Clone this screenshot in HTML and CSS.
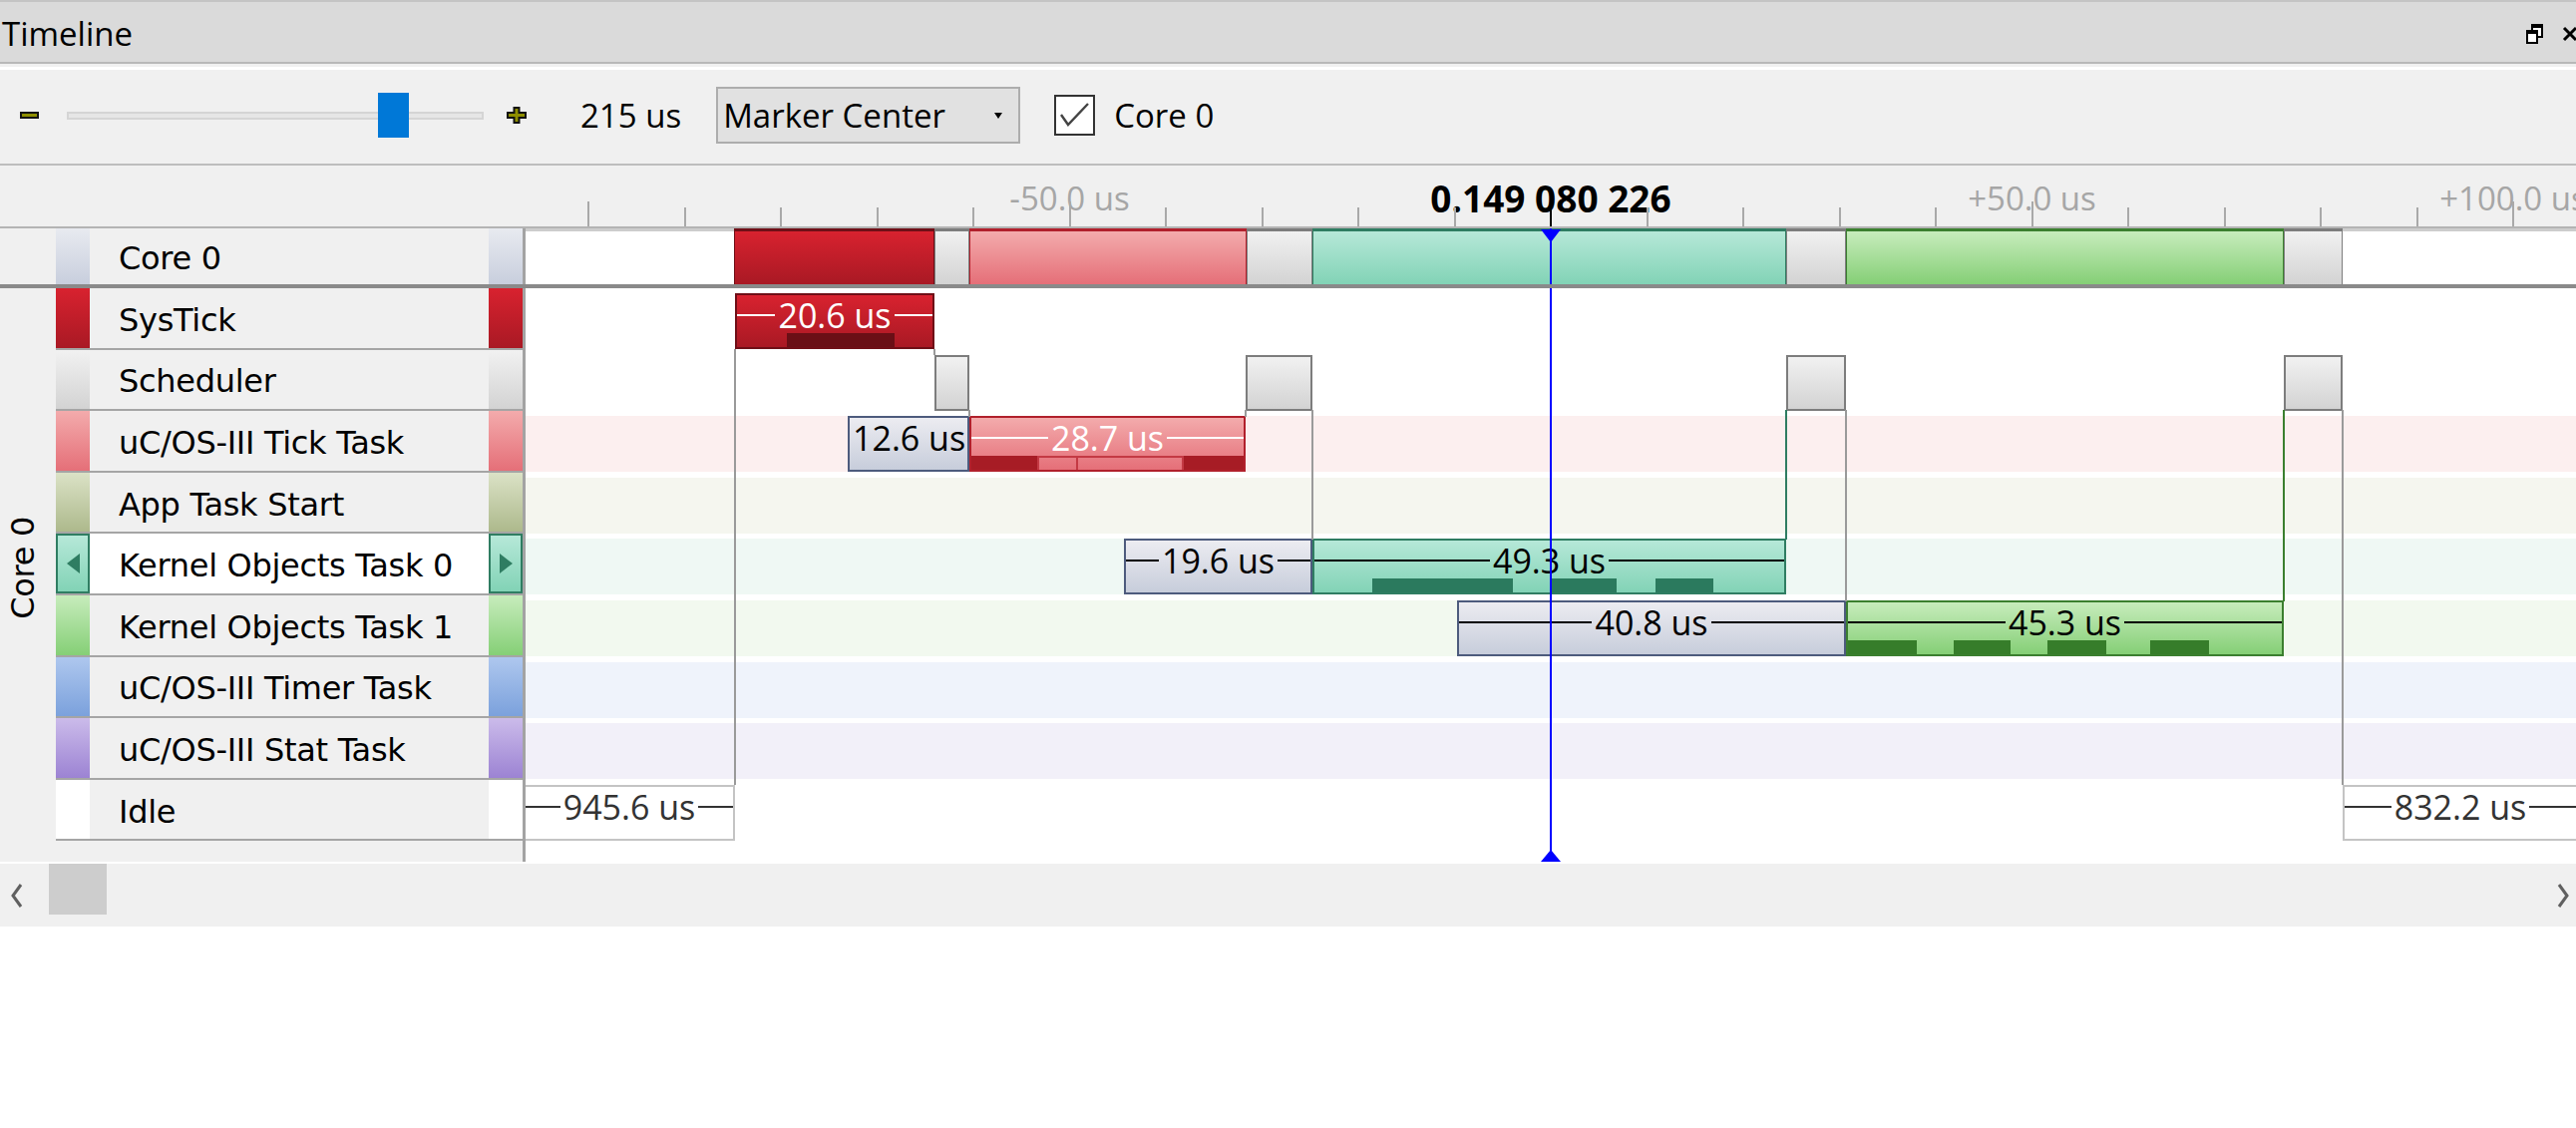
FILE: index.html
```html
<!DOCTYPE html>
<html lang="en">

<head>
  <title>Timeline</title>
  <meta charset="utf-8">
  <link rel="stylesheet" href="styles.css">
</head>

<body>
  <!-- Window title -->
  <div class="titlebar">
    <span class="title">Timeline</span>
    <div class="winbtns">
      <svg width="17" height="20" viewBox="0 0 17 20">
        <rect x="6" y="1" width="10" height="12" fill="#fff" stroke="#000" stroke-width="2" />
        <rect x="6" y="1" width="10" height="3" fill="#000" />
        <rect x="1" y="7" width="10" height="12" fill="#fff" stroke="#000" stroke-width="2" />
        <rect x="1" y="7" width="10" height="3" fill="#000" />
      </svg>
      <svg width="16" height="16" viewBox="0 0 16 16">
        <path d="M2 2 L14 14 M14 2 L2 14" stroke="#000" stroke-width="3" />
      </svg>
    </div>
  </div>

  <!-- Zoom / marker toolbar -->
  <div class="toolbar">
    <span class="zoom-out"></span>
    <div class="slider">
      <div class="slider-track"></div>
      <div class="slider-thumb"></div>
    </div>
    <svg class="zoom-in" width="20" height="17" viewBox="0 0 20 17">
      <polygon points="7.5,1 12.5,1 12.5,6 19,6 19,11 12.5,11 12.5,16 7.5,16 7.5,11 1,11 1,6 7.5,6" fill="#8f8f00"
        stroke="#111" stroke-width="2" />
    </svg>
    <span class="range">215 us</span>
    <div class="dropdown">
      <span>Marker Center</span>
      <span class="caret"></span>
    </div>
    <label class="check">
      <span class="checkbox">
        <svg width="37" height="37" viewBox="0 0 37 37">
          <polyline points="5,18 12,28 32,7" fill="none" stroke="#444" stroke-width="2.4" />
        </svg>
      </span>
      Core 0
    </label>
  </div>

  <!-- Time ruler -->
  <div class="ruler">
    <div class="ruler-gutter"></div>
    <div class="scale">
      <span class="tick-label" style="left:545.5px">-50.0 us</span>
      <span class="tick-label now" style="left:1028px">0.149 080 226</span>
      <span class="tick-label" style="left:1510.5px">+50.0 us</span>
      <span class="tick-label" style="left:1993px">+100.0 us</span>
      <span class="tick major" style="left:62px"></span>
      <span class="tick" style="left:158.5px"></span>
      <span class="tick" style="left:255px"></span>
      <span class="tick" style="left:351.5px"></span>
      <span class="tick" style="left:448px"></span>
      <span class="tick major" style="left:544.5px"></span>
      <span class="tick" style="left:641px"></span>
      <span class="tick" style="left:737.5px"></span>
      <span class="tick" style="left:834px"></span>
      <span class="tick" style="left:930.5px"></span>
      <span class="tick" style="left:1123.5px"></span>
      <span class="tick" style="left:1220px"></span>
      <span class="tick" style="left:1316.5px"></span>
      <span class="tick" style="left:1413px"></span>
      <span class="tick major" style="left:1509.5px"></span>
      <span class="tick" style="left:1606px"></span>
      <span class="tick" style="left:1702.5px"></span>
      <span class="tick" style="left:1799px"></span>
      <span class="tick" style="left:1895.5px"></span>
      <span class="tick major" style="left:1992px"></span>
      <span class="marker-stem"></span>
    </div>
  </div>

  <!-- Core summary -->
  <div class="summary">
    <div class="head">
      <span class="sw c-core"></span>
      <span class="name">Core 0</span>
      <span class="sw c-core"></span>
    </div>
    <div class="sep"></div>
    <div class="summary-track">
      <span class="seg c-systick" style="left:209px;width:201px"></span>
      <span class="seg c-sched" style="left:410px;width:35px"></span>
      <span class="seg c-tick" style="left:445px;width:278px"></span>
      <span class="seg c-sched" style="left:723px;width:66px"></span>
      <span class="seg c-k0" style="left:789px;width:475px"></span>
      <span class="seg c-sched" style="left:1264px;width:60px"></span>
      <span class="seg c-k1" style="left:1324px;width:439px"></span>
      <span class="seg c-sched" style="left:1763px;width:59px"></span>
      <span class="marker-line"></span>
      <span class="marker-down"></span>
    </div>
  </div>
  <div class="divider"></div>

  <!-- Tasks -->
  <div class="main">
    <div class="group"><span>Core 0</span></div>
    <div class="labels">
      <div class="lrow"><span class="sw c-systick"></span><span class="name">SysTick</span><span class="sw c-systick"></span></div>
      <div class="lrow"><span class="sw c-sched"></span><span class="name">Scheduler</span><span class="sw c-sched"></span></div>
      <div class="lrow"><span class="sw c-tick"></span><span class="name">uC/OS-III Tick Task</span><span class="sw c-tick"></span></div>
      <div class="lrow"><span class="sw c-app"></span><span class="name">App Task Start</span><span class="sw c-app"></span></div>
      <div class="lrow selected">
        <span class="sw c-k0"><span class="arrow-l"></span></span>
        <span class="name">Kernel Objects Task 0</span>
        <span class="sw c-k0"><span class="arrow-r"></span></span>
      </div>
      <div class="lrow"><span class="sw c-k1"></span><span class="name">Kernel Objects Task 1</span><span class="sw c-k1"></span></div>
      <div class="lrow"><span class="sw c-timer"></span><span class="name">uC/OS-III Timer Task</span><span class="sw c-timer"></span></div>
      <div class="lrow"><span class="sw c-stat"></span><span class="name">uC/OS-III Stat Task</span><span class="sw c-stat"></span></div>
      <div class="lrow"><span class="sw c-idle"></span><span class="name">Idle</span><span class="sw c-idle"></span></div>
    </div>
    <div class="sep"></div>

    <div class="canvas">
      <!-- SysTick -->
      <div class="lane">
        <div class="band"></div>
        <div class="ev c-systick light" style="left:210px;width:200px">
          <div class="dur"><span>20.6 us</span></div>
          <span class="strip" style="left:50px;width:108px"></span>
        </div>
      </div>
      <!-- Scheduler -->
      <div class="lane">
        <div class="band"></div>
        <div class="ev c-sched" style="left:410px;width:35px"></div>
        <div class="ev c-sched" style="left:722px;width:67px"></div>
        <div class="ev c-sched" style="left:1264px;width:60px"></div>
        <div class="ev c-sched" style="left:1763px;width:59px"></div>
      </div>
      <!-- Tick task -->
      <div class="lane">
        <div class="band b-tick"></div>
        <div class="ev c-ready" style="left:323px;width:122px">
          <div class="dur"><span>12.6 us</span></div>
        </div>
        <div class="ev c-tick light" style="left:445px;width:277px">
          <div class="dur"><span>28.7 us</span></div>
          <span class="strip" style="left:0;width:66px"></span>
          <span class="strip hollow" style="left:66px;width:147px"></span>
          <span class="strip thin" style="left:105px"></span>
          <span class="strip" style="left:213px;width:60px"></span>
        </div>
      </div>
      <!-- App task start -->
      <div class="lane">
        <div class="band b-app"></div>
      </div>
      <!-- Kernel objects task 0 -->
      <div class="lane">
        <div class="band b-k0"></div>
        <div class="ev c-ready" style="left:600px;width:189px">
          <div class="dur"><span>19.6 us</span></div>
        </div>
        <div class="ev c-k0" style="left:789px;width:475px">
          <div class="dur"><span>49.3 us</span></div>
          <span class="strip" style="left:58px;width:141px"></span>
          <span class="strip" style="left:238px;width:65px"></span>
          <span class="strip" style="left:342px;width:58px"></span>
        </div>
      </div>
      <!-- Kernel objects task 1 -->
      <div class="lane">
        <div class="band b-k1"></div>
        <div class="ev c-ready" style="left:934px;width:390px">
          <div class="dur"><span>40.8 us</span></div>
        </div>
        <div class="ev c-k1" style="left:1324px;width:439px">
          <div class="dur"><span>45.3 us</span></div>
          <span class="strip" style="left:0;width:69px"></span>
          <span class="strip" style="left:106px;width:57px"></span>
          <span class="strip" style="left:200px;width:59px"></span>
          <span class="strip" style="left:303px;width:59px"></span>
        </div>
      </div>
      <!-- Timer task -->
      <div class="lane">
        <div class="band b-timer"></div>
      </div>
      <!-- Stat task -->
      <div class="lane">
        <div class="band b-stat"></div>
      </div>
      <!-- Idle -->
      <div class="lane">
        <div class="band"></div>
        <div class="ev c-idle" style="left:-2px;width:212px">
          <div class="dur"><span>945.6 us</span></div>
        </div>
        <div class="ev c-idle" style="left:1822px;width:236px">
          <div class="dur"><span>832.2 us</span></div>
        </div>
      </div>

      <!-- Context switches -->
      <span class="link" style="left:209px;top:61px;height:437px"></span>
      <span class="link" style="left:409px;top:61px;height:6px"></span>
      <span class="link" style="left:444px;top:122px;height:7px"></span>
      <span class="link" style="left:721px;top:122px;height:7px"></span>
      <span class="link" style="left:788px;top:122px;height:130px"></span>
      <span class="link teal" style="left:1263px;top:122px;height:130px"></span>
      <span class="link" style="left:1323px;top:122px;height:192px"></span>
      <span class="link green" style="left:1762px;top:122px;height:192px"></span>
      <span class="link" style="left:1821px;top:122px;height:376px"></span>

      <span class="marker-line"></span>
      <span class="marker-up"></span>
    </div>
  </div>

  <!-- Horizontal scrollbar -->
  <div class="hscroll">
    <svg width="14" height="26" viewBox="0 0 14 26">
      <polyline points="11,2 3,13 11,24" fill="none" stroke="#606060" stroke-width="3" />
    </svg>
    <span class="hthumb"></span>
    <svg class="chev-right" width="14" height="26" viewBox="0 0 14 26">
      <polyline points="3,2 11,13 3,24" fill="none" stroke="#606060" stroke-width="3" />
    </svg>
  </div>
</body>

</html>
```

FILE: styles.css
```css
* {
  box-sizing: border-box;
}

body {
  margin: 0;
  width: 2583px;
  height: 1131px;
  overflow: hidden;
  background-color: #ffffff;
  font-family: "Open Sans", "Liberation Sans", sans-serif;
  font-size: 33px;
  color: #000000;
}

/* Window title */
.titlebar {
  display: flex;
  align-items: center;
  height: 64px;
  padding-top: 3px;
  background-color: #dadada;
  border-top: 2px solid #c4c4c4;
  border-bottom: 2px solid #b8b8b8;
}

.title {
  margin-left: 2px;
}

.winbtns {
  display: flex;
  align-items: center;
  gap: 19px;
  margin-left: auto;
  margin-right: -2px;
}

/* Toolbar */
.toolbar {
  display: flex;
  align-items: center;
  height: 102px;
  padding: 3px 0 0 20px;
  background-color: #f0f0f0;
  border-bottom: 2px solid #bdbdbd;
  box-shadow: inset 0 3px 0 #f0f0f0, inset 0 6px 0 #ffffff;
}

.zoom-out {
  width: 19px;
  height: 7px;
  background-color: #8f8f00;
  border: 2px solid #141414;
}

.slider {
  position: relative;
  display: flex;
  align-items: center;
  width: 418px;
  height: 45px;
  margin-left: 28px;
}

.slider-track {
  width: 100%;
  height: 8px;
  background-color: #e6e6e6;
  border: 2px solid #d5d5d5;
}

.slider-thumb {
  position: absolute;
  left: 312px;
  top: 0;
  width: 31px;
  height: 45px;
  background-color: #0078d7;
}

.zoom-in {
  margin-left: 23px;
}

.range {
  margin-left: 54px;
}

.dropdown {
  display: flex;
  align-items: center;
  width: 305px;
  height: 57px;
  margin-left: 35px;
  padding-left: 5px;
  background-color: #e1e1e1;
  border: 2px solid #adadad;
}

.caret {
  margin-left: auto;
  margin-right: 16px;
  border-left: 4px solid transparent;
  border-right: 4px solid transparent;
  border-top: 6px solid #000000;
}

.check {
  display: flex;
  align-items: center;
  margin-left: 34px;
}

.checkbox {
  display: flex;
  width: 41px;
  height: 41px;
  margin-right: 19px;
  background-color: #ffffff;
  border: 2px solid #333333;
}

/* Ruler */
.ruler {
  display: flex;
  height: 63px;
  background-color: #f0f0f0;
  border-bottom: 2px solid #b4b4b4;
}

.ruler-gutter {
  width: 527px;
  flex-shrink: 0;
}

.scale {
  position: relative;
  flex: 1;
  overflow: hidden;
}

.tick {
  position: absolute;
  bottom: 0;
  width: 2px;
  height: 19px;
  background-color: #a9a9a9;
}

.tick.major {
  height: 25px;
}

.tick-label {
  position: absolute;
  top: 16px;
  line-height: 34px;
  transform: translateX(-50%);
  color: #a6a6a6;
  white-space: nowrap;
}

.tick-label.now {
  color: #000000;
  font-weight: 700;
  font-size: 37px;
}

.marker-stem {
  position: absolute;
  left: 1027px;
  bottom: 0;
  width: 2px;
  height: 17px;
  background-color: #000000;
}

/* Summary row */
.summary {
  display: flex;
  height: 56px;
  background-color: #f0f0f0;
}

.head {
  display: flex;
  width: 524px;
  padding-left: 56px;
}

.sep {
  width: 3px;
  flex-shrink: 0;
  background-color: #a3a3a3;
}

.summary-track {
  position: relative;
  flex: 1;
  overflow: hidden;
  background-color: #ffffff;
  box-shadow: inset 0 3px 0 #cdcdcd;
}

.seg {
  position: absolute;
  top: 0;
  bottom: 0;
  border-style: solid;
  border-width: 3px 1px 0 1px;
}

.divider {
  height: 4px;
  background-color: #8a8a8a;
}

/* Task colours */
.c-systick {
  background: linear-gradient(#d8222f, #a91924);
  border-color: #6f0f17;
}

.c-sched {
  background: linear-gradient(#f1f1f1, #d3d3d3);
  border-color: #7d7d7d;
}

.c-tick {
  background: linear-gradient(#f3abac, #e56f78);
  border-color: #b1202c;
}

.c-app {
  background: linear-gradient(#dbe2c6, #adb98c);
}

.c-k0 {
  background: linear-gradient(#b6e8d8, #82d3b6);
  border-color: #2f7d62;
}

.c-k1 {
  background: linear-gradient(#c7ecbc, #85cf76);
  border-color: #3b7f2f;
}

.c-timer {
  background: linear-gradient(#aec7ee, #7ba1dc);
}

.c-stat {
  background: linear-gradient(#cbbbea, #9c83d3);
}

.c-idle {
  background: #ffffff;
  border-color: #c4c4c4;
}

.c-ready {
  background: linear-gradient(#ececf1, #c7cddb);
  border-color: #4d5b7d;
}

.c-core {
  background: linear-gradient(#e8eaf0, #c8cedd);
}

/* Task labels */
.head,
.lrow,
.group {
  font-family: "DejaVu Sans", Verdana, sans-serif;
  font-size: 32px;
  letter-spacing: -0.3px;
}

.main {
  display: flex;
  height: 575px;
  background-color: #f0f0f0;
}

.group {
  display: flex;
  align-items: center;
  justify-content: center;
  width: 56px;
  height: 554px;
  flex-shrink: 0;
  padding: 6px 10px 0 0;
}

.group span {
  writing-mode: vertical-rl;
  transform: rotate(180deg);
}

.labels {
  display: flex;
  flex-direction: column;
  width: 468px;
  flex-shrink: 0;
}

.lrow {
  display: flex;
  height: 61.6px;
  border-bottom: 2px solid #a5a5a5;
}

.sw {
  width: 34px;
  flex-shrink: 0;
}

.name {
  flex: 1;
  display: flex;
  align-items: center;
  padding: 4px 0 0 29px;
  white-space: nowrap;
}

.lrow.selected .name {
  background-color: #ffffff;
}

.lrow.selected .sw {
  display: flex;
  align-items: center;
  justify-content: center;
  border: 2px solid #2f7d62;
}

.arrow-l {
  border-top: 10px solid transparent;
  border-bottom: 10px solid transparent;
  border-right: 13px solid #2f7d62;
}

.arrow-r {
  border-top: 10px solid transparent;
  border-bottom: 10px solid transparent;
  border-left: 13px solid #2f7d62;
}

/* Timeline canvas */
.canvas {
  position: relative;
  flex: 1;
  overflow: hidden;
  background-color: #ffffff;
}

.lane {
  position: relative;
  height: 61.6px;
  padding-top: 5px;
}

.band {
  height: 56px;
}

.b-tick {
  background-color: #fcefef;
}

.b-app {
  background-color: #f5f6ef;
}

.b-k0 {
  background-color: #eff8f4;
}

.b-k1 {
  background-color: #f2f9ef;
}

.b-timer {
  background-color: #eff3fb;
}

.b-stat {
  background-color: #f2f0f9;
}

.ev {
  position: absolute;
  top: 5px;
  height: 56px;
  border-width: 2px;
  border-style: solid;
  font-size: 34px;
  color: #000000;
}

.ev.light {
  color: #ffffff;
}

.ev.c-idle {
  color: #333333;
}

.dur {
  display: flex;
  align-items: center;
  height: 40px;
}

.dur::before,
.dur::after {
  content: "";
  flex: 1;
  height: 2px;
  background-color: currentColor;
}

.dur span {
  flex-shrink: 0;
  padding: 0 3px;
  line-height: 40px;
  white-space: nowrap;
}

.strip {
  position: absolute;
  bottom: 0;
  height: 14px;
}

.c-systick .strip {
  background-color: #6a0f16;
}

.c-tick .strip {
  background-color: #a71c25;
}

.c-tick .strip.hollow {
  background-color: transparent;
  border: 2px solid #c43a44;
  border-bottom: none;
}

.c-tick .strip.thin {
  width: 2px;
  background-color: #c43a44;
}

.c-k0 .strip {
  background-color: #2b7a5e;
}

.c-k1 .strip {
  background-color: #367d2a;
}

.link {
  position: absolute;
  width: 2px;
  background-color: #9a9a9a;
}

.link.teal {
  background-color: #2f7d62;
}

.link.green {
  background-color: #3b7f2f;
}

/* Time marker */
.marker-line {
  position: absolute;
  left: 1027px;
  top: 0;
  bottom: 0;
  width: 2px;
  background-color: #0000ff;
}

.marker-down {
  position: absolute;
  left: 1018px;
  top: 1px;
  border-left: 10px solid transparent;
  border-right: 10px solid transparent;
  border-top: 13px solid #0000ff;
}

.marker-up {
  position: absolute;
  left: 1018px;
  bottom: 0;
  border-left: 10px solid transparent;
  border-right: 10px solid transparent;
  border-bottom: 12px solid #0000ff;
}

/* Scrollbar */
.hscroll {
  display: flex;
  align-items: center;
  height: 63px;
  margin-top: 2px;
  padding: 0 6px 0 10px;
  background-color: #f0f0f0;
}

.hthumb {
  align-self: flex-start;
  width: 58px;
  height: 51px;
  margin-left: 25px;
  background-color: #cdcdcd;
}

.chev-right {
  margin-left: auto;
}
```
